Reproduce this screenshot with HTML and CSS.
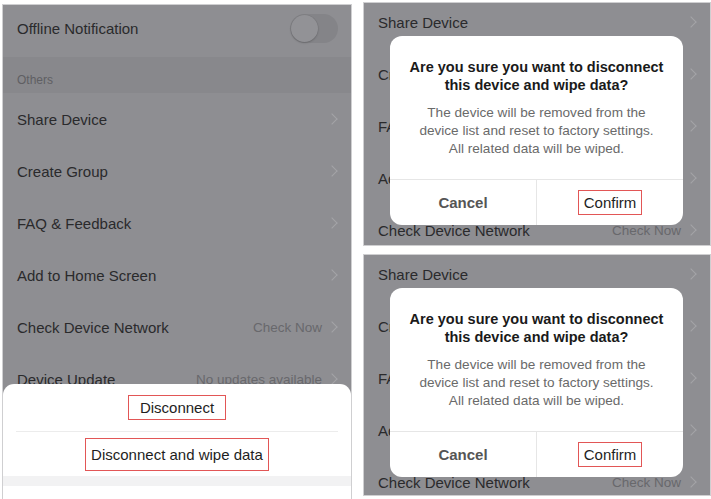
FILE: index.html
```html
<!DOCTYPE html>
<html>
<head>
<meta charset="utf-8">
<link rel="stylesheet" href="styles.css">
</head>
<body>
<div class="page">
  <div class="panel left">
    <div class="row tall">
      <span class="label">Offline Notification</span>
      <span class="toggle"><span class="knob"></span></span>
    </div>
    <div class="section">Others</div>
    <div class="row"><span class="label">Share Device</span><span class="chev"></span></div>
    <div class="row"><span class="label">Create Group</span><span class="chev"></span></div>
    <div class="row"><span class="label">FAQ &amp; Feedback</span><span class="chev"></span></div>
    <div class="row"><span class="label">Add to Home Screen</span><span class="chev"></span></div>
    <div class="row"><span class="label">Check Device Network</span><span class="value">Check Now</span><span class="chev"></span></div>
    <div class="row"><span class="label">Device Update</span><span class="value">No updates available</span><span class="chev"></span></div>

    <div class="sheet">
      <div class="sheet-item first"><span class="mark mark-a">Disconnect</span></div>
      <div class="sheet-item second"><span class="mark mark-b">Disconnect and wipe data</span></div>
      <div class="sheet-gap"></div>
    </div>
  </div>

  <div class="right-col">
    <div class="panel right top">
      <div class="list">
        <div class="row"><span class="label">Share Device</span><span class="chev"></span></div>
        <div class="row"><span class="label">Create Group</span><span class="chev"></span></div>
        <div class="row"><span class="label">FAQ &amp; Feedback</span><span class="chev"></span></div>
        <div class="row"><span class="label">Add to Home Screen</span><span class="chev"></span></div>
        <div class="row"><span class="label">Check Device Network</span><span class="value">Check Now</span><span class="chev"></span></div>
      </div>
      <div class="dialog">
        <div class="dlg-body">
          <div class="dlg-title">Are you sure you want to disconnect<br>this device and wipe data?</div>
          <div class="dlg-text">The device will be removed from the<br>device list and reset to factory settings.<br>All related data will be wiped.</div>
        </div>
        <div class="dlg-actions">
          <div class="dlg-btn cancel">Cancel</div>
          <div class="dlg-btn confirm"><span class="mark mark-c">Confirm</span></div>
        </div>
      </div>
    </div>

    <div class="panel right bottom">
      <div class="list">
        <div class="row"><span class="label">Share Device</span><span class="chev"></span></div>
        <div class="row"><span class="label">Create Group</span><span class="chev"></span></div>
        <div class="row"><span class="label">FAQ &amp; Feedback</span><span class="chev"></span></div>
        <div class="row"><span class="label">Add to Home Screen</span><span class="chev"></span></div>
        <div class="row"><span class="label">Check Device Network</span><span class="value">Check Now</span><span class="chev"></span></div>
      </div>
      <div class="dialog">
        <div class="dlg-body">
          <div class="dlg-title">Are you sure you want to disconnect<br>this device and wipe data?</div>
          <div class="dlg-text">The device will be removed from the<br>device list and reset to factory settings.<br>All related data will be wiped.</div>
        </div>
        <div class="dlg-actions">
          <div class="dlg-btn cancel">Cancel</div>
          <div class="dlg-btn confirm"><span class="mark mark-c">Confirm</span></div>
        </div>
      </div>
    </div>
  </div>
</div>
</body>
</html>
```

FILE: styles.css
```css
* { box-sizing: border-box; }
html, body { margin: 0; padding: 0; background: #ffffff; }
body {
  font-family: "Liberation Sans", Arial, sans-serif;
  color: #2a2a2c;
  width: 711px;
  height: 499px;
  overflow: hidden;
}
.page {
  display: flex;
  padding-left: 2px;
  gap: 11px;
  height: 499px;
}
.panel {
  position: relative;
  background: #8e8e92;
  border: 1px solid #cfcfd1;
  overflow: hidden;
}
.left {
  width: 350px;
  margin-top: 4px;
  height: 500px;
  border-bottom: none;
}
.right-col {
  display: flex;
  flex-direction: column;
  gap: 8px;
  padding-top: 2px;
}
.right { width: 348px; }
.right.top { height: 244px; }
.right.bottom { height: 242px; }

.row {
  display: flex;
  align-items: center;
  height: 52px;
  padding: 0 12px 0 14px;
  font-size: 15px;
}
.row.tall { padding-bottom: 6px; }
.label { flex: 1; white-space: nowrap; }
.value {
  color: #68686c;
  font-size: 13.5px;
  margin-right: 6px;
}
.chev {
  width: 8px;
  height: 8px;
  border-top: 1.2px solid #a4a4a8;
  border-right: 1.2px solid #a4a4a8;
  transform: rotate(45deg);
  margin-right: 3px;
}
.section {
  height: 36px;
  background: #88888c;
  color: #5f5f63;
  font-size: 12px;
  padding: 16px 14px 0;
}
.toggle {
  position: relative;
  width: 48px;
  height: 29px;
  border-radius: 15px;
  background: #848488;
  margin-right: 1px;
}
.knob {
  position: absolute;
  left: 1px;
  top: 1px;
  width: 27px;
  height: 27px;
  border-radius: 50%;
  background: #929296;
  box-shadow: 0 1px 2px rgba(0,0,0,0.18), 0 0 0 0.5px rgba(0,0,0,0.06);
}

.list { margin-top: -7px; }

.sheet {
  position: absolute;
  left: 0;
  right: 0;
  top: 379px;
  bottom: 0;
  background: #ffffff;
  border-radius: 11px 11px 0 0;
  display: flex;
  flex-direction: column;
}
.sheet-item {
  display: flex;
  align-items: center;
  justify-content: center;
  font-size: 15px;
  color: #1e1e1e;
}
.sheet-item.first {
  height: 48px;
  margin: 0 13px;
  border-bottom: 1px solid #ececec;
}
.sheet-item.second { height: 44px; }
.sheet-gap {
  height: 10px;
  background: #f2f2f3;
}
.mark { border: 1.5px solid #e25656; }
.mark-a { padding: 3px 11px; }
.mark-b { padding: 7px 5px; }
.mark-c { padding: 3px 5px; }

.dialog {
  position: absolute;
  left: 26px;
  top: 33px;
  width: 293px;
  height: 189px;
  background: #ffffff;
  border-radius: 12px;
  display: flex;
  flex-direction: column;
  overflow: hidden;
}
.dlg-body {
  flex: 1;
  padding-top: 22px;
  text-align: center;
  border-bottom: 1px solid #e6e6e6;
}
.dlg-title {
  font-weight: bold;
  font-size: 14.5px;
  line-height: 18px;
  color: #1a1a1a;
}
.dlg-text {
  margin-top: 10px;
  font-size: 13.6px;
  line-height: 18px;
  color: #6a6a6a;
}
.dlg-actions {
  display: flex;
  height: 45px;
}
.dlg-btn {
  flex: 1;
  display: flex;
  align-items: center;
  justify-content: center;
  font-size: 15px;
}
.cancel {
  color: #555555;
  font-weight: bold;
  border-right: 1px solid #e6e6e6;
}
.confirm { color: #1e1e1e; }
```
